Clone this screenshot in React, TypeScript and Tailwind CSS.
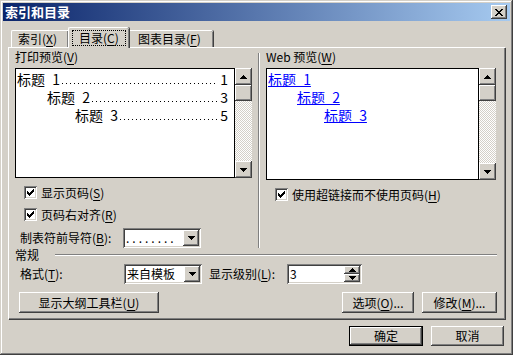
import React from "react";

const raised =
  "shadow-[inset_-1px_-1px_#404040,inset_1px_1px_#ffffff,inset_-2px_-2px_#808080,inset_2px_2px_#d4d0c8]";
const sunken =
  "shadow-[inset_1px_1px_#808080,inset_-1px_-1px_#ffffff,inset_2px_2px_#404040,inset_-2px_-2px_#d4d0c8]";

function U({ c }: { c: string }) {
  return (
    <span>
      (<span className="underline underline-offset-2">{c}</span>)
    </span>
  );
}

function Arrow({ up }: { up?: boolean }) {
  return (
    <svg width="7" height="4" viewBox="0 0 7 4">
      {up ? (
        <path d="M3 0h1v1h1v1h1v1h1v1H0V3h1V2h1V1h1z" fill="#000" />
      ) : (
        <path d="M0 0h7v1H6v1H5v1H4v1H3V3H2V2H1V1H0z" fill="#000" />
      )}
    </svg>
  );
}

function ScrollBar() {
  return (
    <div className="flex w-[17px] shrink-0 flex-col">
      <div className={`flex h-[17px] items-center justify-center bg-[#d4d0c8] ${raised}`}>
        <Arrow up />
      </div>
      <div className={`h-[16px] bg-[#d4d0c8] ${raised}`} />
      <div className="flex-1 bg-[repeating-conic-gradient(#ffffff_0_25%,#d4d0c8_0_50%)] bg-[length:2px_2px]" />
      <div className={`flex h-[17px] items-center justify-center bg-[#d4d0c8] ${raised}`}>
        <Arrow />
      </div>
    </div>
  );
}

function Check({ label, k }: { label: string; k: string }) {
  return (
    <div className="flex h-[13px] items-center">
      <div className={`flex h-[13px] w-[13px] items-center justify-center bg-white ${sunken}`}>
        <svg width="7" height="7" viewBox="0 0 7 7">
          <path d="M0 2h1v1h1v1h1V3h1V2h1V1h1V0h1v3H6v1H5v1H4v1H3v1H2V6H1V5H0z" fill="#000" />
        </svg>
      </div>
      <span className="ml-[4px] leading-[13px]">
        {label}
        <U c={k} />
      </span>
    </div>
  );
}

function Combo({ value, w, spaced }: { value: string; w: string; spaced?: boolean }) {
  return (
    <div className={`flex h-[20px] ${w} items-center bg-white p-[2px] ${sunken}`}>
      <span className={`flex-1 pl-[1px] leading-[16px] ${spaced ? "tracking-[3px]" : ""}`}>{value}</span>
      <div className={`flex h-[16px] w-[16px] items-center justify-center bg-[#d4d0c8] ${raised}`}>
        <Arrow />
      </div>
    </div>
  );
}

function Btn({ children, w, def }: { children: React.ReactNode; w: string; def?: boolean }) {
  return (
    <div
      className={`flex ${w} items-center justify-center bg-[#d4d0c8] ${
        def
          ? "shadow-[inset_0_0_0_1px_#000,inset_-2px_-2px_#404040,inset_2px_2px_#ffffff,inset_-3px_-3px_#808080]"
          : raised
      }`}
    >
      {children}
    </div>
  );
}

function TocLine({ indent, title, page }: { indent: string; title: string; page: string }) {
  return (
    <div className={`flex h-[18px] items-stretch ${indent} pr-[6px] text-[14px] leading-[18px]`}>
      <span className="whitespace-nowrap [word-spacing:4px]">{title}</span>
      <span className="ml-[2px] min-w-0 flex-1 bg-[linear-gradient(to_right,#000_1px,transparent_1px)] bg-[length:4px_1px] bg-[position:0_13px] bg-repeat-x" />
      <span className="pl-[3px]">{page}</span>
    </div>
  );
}

export default function App() {
  return (
    <div
      className={`flex h-[355px] w-[513px] flex-col bg-[#d4d0c8] p-[3px] text-[12px] text-black font-['Noto_Sans_CJK_SC',sans-serif] shadow-[inset_-1px_-1px_#404040,inset_1px_1px_#d4d0c8,inset_-2px_-2px_#808080,inset_2px_2px_#ffffff]`}
    >
      {/* title bar */}
      <div className="flex h-[18px] items-center bg-[linear-gradient(to_right,#0a246a,#a6caf0)] pl-[2px] pr-[3px]">
        <span className="flex-1 text-[13px] font-bold leading-[18px] text-white">索引和目录</span>
        <div className={`flex h-[14px] w-[16px] items-center justify-center bg-[#d4d0c8] ${raised}`}>
          <svg width="8" height="7" viewBox="0 0 8 7">
            <path
              d="M0 0h2v1h1v1h2V1h1V0h2v1H7v1H6v1H5v1h1v1h1v1h1v1H6V6H5V5H3v1H2v1H0V6h1V5h1V4h1V3H2V2H1V1H0z"
              fill="#000"
            />
          </svg>
        </div>
      </div>

      {/* tabs */}
      <div className="mt-[6px] flex h-[20px] items-end pl-[8px]">
        <div className="flex h-[17px] w-[57px] items-center rounded-tl-[2px] border-l border-t border-white pl-[6px] shadow-[inset_-1px_0_#808080]">
          索引<U c="X" />
        </div>
        <div className="relative z-10 mb-[-1px] flex h-[21px] w-[61px] items-start rounded-tl-[2px] rounded-tr-[2px] border-l border-t border-white bg-[#d4d0c8] pl-[3px] pt-[2px] shadow-[1px_0_#404040,inset_-1px_0_#808080]">
          <span className="flex h-[16px] items-center border border-dotted border-black px-[6px] leading-[14px]">
            目录<U c="C" />
          </span>
        </div>
        <div className="ml-[1px] flex h-[17px] w-[83px] items-center rounded-tr-[2px] border-t border-white pl-[8px] shadow-[1px_0_#404040,inset_-1px_0_#808080]">
          图表目录<U c="F" />
        </div>
      </div>

      {/* panel */}
      <div className="mx-[5px] flex h-[272px] flex-col border-l border-t border-white shadow-[1px_1px_#404040,inset_-1px_-1px_#808080]">
        <div className="flex h-[200px] pl-[6px] pt-[2px]">
          {/* left column */}
          <div className="flex w-[237px] flex-col">
            <div className="h-[14px] leading-[14px]">
              打印预览<U c="V" />
            </div>
            <div className="mt-[4px] flex h-[112px]">
              <div className="min-w-0 flex-1 border border-black bg-white pt-[1px]">
                <TocLine indent="pl-[1px]" title="标题 1" page="1" />
                <TocLine indent="pl-[31px]" title="标题 2" page="3" />
                <TocLine indent="pl-[59px]" title="标题 3" page="5" />
              </div>
              <ScrollBar />
            </div>
            <div className="mt-[8px] flex flex-col gap-[9px] pl-[9px]">
              <Check label="显示页码" k="S" />
              <Check label="页码右对齐" k="R" />
            </div>
            <div className="mt-[7px] flex items-center pl-[5px]">
              <span className="w-[103px]">
                制表符前导符<U c="B" />:
              </span>
              <Combo value="........" w="w-[78px]" spaced />
            </div>
          </div>
          {/* separator */}
          <div className="ml-[6px] mt-[3px] w-[2px] border-l border-[#808080] bg-white" />
          {/* right column */}
          <div className="ml-[6px] flex w-[230px] flex-col">
            <div className="h-[14px] leading-[14px]">
              Web 预览<U c="W" />
            </div>
            <div className="mt-[4px] flex h-[112px]">
              <div className="min-w-0 flex-1 border border-black bg-white pt-[1px] text-[14px] text-[#0000ff] [word-spacing:4px]">
                <div className="h-[18px] pl-[1px] leading-[18px]">
                  <span className="underline">标题 1</span>
                </div>
                <div className="h-[18px] pl-[30px] leading-[18px]">
                  <span className="underline">标题 2</span>
                </div>
                <div className="h-[18px] pl-[57px] leading-[18px]">
                  <span className="underline">标题 3</span>
                </div>
              </div>
              <ScrollBar />
            </div>
            <div className="mt-[8px] pl-[9px]">
              <Check label="使用超链接而不使用页码" k="H" />
            </div>
          </div>
        </div>

        {/* 常规 */}
        <div className="flex h-[14px] items-center pl-[6px] pr-[8px]">
          <span className="leading-[14px]">常规</span>
          <div className="ml-[16px] h-[2px] flex-1 border-t border-[#808080] bg-white" />
        </div>
        <div className="mt-[2px] flex h-[20px] items-center pl-[11px]">
          <span className="w-[104px]">
            格式<U c="T" />:
          </span>
          <Combo value="来自模板" w="w-[78px]" />
          <span className="ml-[7px] w-[78px]">
            显示级别<U c="L" />:
          </span>
          <div className={`flex h-[20px] w-[75px] items-center bg-white p-[2px] ${sunken}`}>
            <span className="flex-1 pl-[1px]">3</span>
            <div className="flex h-[16px] w-[16px] flex-col">
              <div className={`flex h-[8px] items-center justify-center bg-[#d4d0c8] ${raised}`}>
                <Arrow up />
              </div>
              <div className={`flex h-[8px] items-center justify-center bg-[#d4d0c8] ${raised}`}>
                <Arrow />
              </div>
            </div>
          </div>
        </div>
        <div className="mt-[8px] flex h-[21px] pl-[10px] pr-[8px]">
          <Btn w="w-[140px]">
            显示大纲工具栏<U c="U" />
          </Btn>
          <div className="flex-1" />
          <Btn w="w-[72px]">
            选项<U c="O" />...
          </Btn>
          <div className="w-[8px]" />
          <Btn w="w-[75px]">
            修改<U c="M" />...
          </Btn>
        </div>
      </div>

      {/* bottom buttons */}
      <div className="mt-[7px] flex h-[20px] justify-end gap-[8px] pr-[6px]">
        <Btn w="w-[74px]" def>
          确定
        </Btn>
        <Btn w="w-[73px]">取消</Btn>
      </div>
    </div>
  );
}
